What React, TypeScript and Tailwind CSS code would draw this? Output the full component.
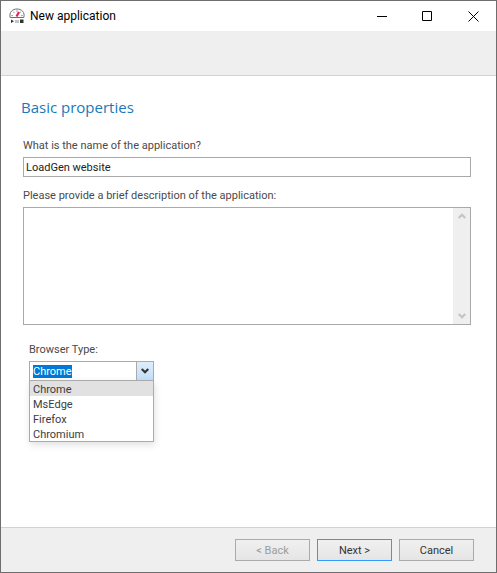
import React, { useEffect, useRef, useState } from 'react';

const BROWSERS = ['Chrome', 'MsEdge', 'Firefox', 'Chromium'];

const AppIcon: React.FC = () => (
  <svg width="16" height="16" viewBox="0 0 16 16" fill="none" aria-hidden="true">
    <path d="M1.200 9.500C-.2 4.300 3.400 1 8 1s8.200 3.300 6.800 8.500z" fill="#fff" stroke="#6a6e73" strokeWidth="1" />
    <path d="M8 2.200v1.600M4.300 3.700l.9 1.200M11.700 3.700l-.9 1.200M2.300 7.600h1.600M12.100 7.600h1.600" stroke="#8b8f94" strokeWidth="1" />
    <path d="M10 4 7.500 8.500" stroke="#e8205a" strokeWidth="2.200" />
    <path d="M2 11.500v3.500l3-1.750z" fill="#333" />
    <path d="M7 12v3M9 12v3" stroke="#85898d" strokeWidth="1" />
    <path d="M11 11.500h3.500v3.500h-3.500z" fill="#333" />
  </svg>
);

interface ChevronProps {
  up?: boolean;
  className?: string;
}

const Chevron: React.FC<ChevronProps> = ({ up, className }) => (
  <svg width="8" height="6" viewBox="0 0 8 6" fill="none" stroke="currentColor" strokeWidth="2.200" className={className} aria-hidden="true">
    <path d={up ? 'M.7 5 4 1.700 7.300 5' : 'M.7 1 4 4.300 7.300 1'} />
  </svg>
);

const TitleBar: React.FC = () => (
  <header className="flex h-[30px] items-center bg-white pl-2">
    <AppIcon />
    <h1 className="ml-[5px] flex-1 text-[12px] leading-4 text-black">New application</h1>
    <button type="button" aria-label="Minimize" className="flex h-full w-[45px] items-center justify-center">
      <svg width="11" height="11" viewBox="0 0 11 11" stroke="#000"><path d="M0 5.500h10" /></svg>
    </button>
    <button type="button" aria-label="Maximize" className="flex h-full w-[45px] items-center justify-center">
      <svg width="11" height="11" viewBox="0 0 11 11" fill="none" stroke="#000"><path d="M.5.5h9v9h-9z" /></svg>
    </button>
    <button type="button" aria-label="Close" className="flex h-full w-[46px] items-center justify-center">
      <svg width="11" height="11" viewBox="0 0 11 11" stroke="#000"><path d="m.5.5 10 10m0-10-10 10" /></svg>
    </button>
  </header>
);

const BrowserSelect: React.FC = () => {
  const [value, setValue] = useState(BROWSERS[0]);
  const [open, setOpen] = useState(true);
  const inputRef = useRef<HTMLInputElement>(null);

  useEffect(() => {
    inputRef.current?.focus();
    inputRef.current?.select();
  }, []);

  return (
    <div className="relative w-[125px]">
      <div className="flex h-5 border border-[#ababab] bg-white">
        <input
          id="browser"
          ref={inputRef}
          value={value}
          onChange={(e) => setValue(e.target.value)}
          className="min-w-0 flex-1 pl-[3px] leading-[13px] text-[#3c3c3c] outline-none selection:bg-[#0078d7] selection:text-white"
        />
        <button
          type="button"
          aria-label="Show browsers"
          onClick={() => setOpen(!open)}
          className="flex w-[17px] items-center justify-center border-l border-[#ababab] bg-linear-to-b from-[#deedfb] to-[#c2dffa] text-[#333]"
        >
          <Chevron />
        </button>
      </div>
      {open && (
        <select
          size={4}
          aria-label="Browsers"
          value={value}
          onChange={(e) => setValue(e.target.value)}
          className="absolute top-[19px] left-0 h-[62px] w-full appearance-none overflow-hidden border border-[#ababab] bg-white shadow-[1px_3px_7px_rgba(0,0,0,0.12)] outline-none"
        >
          {BROWSERS.map((name) => (
            <option
              key={name}
              value={name}
              className="h-[15px] min-h-0 pt-[2px] pr-0 pb-0 pl-[3px] leading-[15px] text-[#3c3c3c] checked:bg-linear-to-b checked:from-[#e1e1e1] checked:to-[#e1e1e1]"
            >
              {name}
            </option>
          ))}
        </select>
      )}
    </div>
  );
};

export default function App() {
  const [name, setName] = useState('LoadGen website');
  const [description, setDescription] = useState('');

  return (
    <div className="flex min-h-screen flex-col border border-[#6e6e6e] bg-white font-['Roboto',sans-serif] text-[11px] leading-[13px] text-[#4a4a4a]">
      <TitleBar />
      <div className="h-[45px] border-b border-[#d2d2d2] bg-[#efefef]" />

      <main className="flex flex-1 flex-col pr-[25px] pl-[22px]">
        <h2 className="-ml-[2px] pt-5 font-['Open_Sans',sans-serif] text-[15px] leading-[22px] text-[#1979ba]">Basic properties</h2>

        <label htmlFor="name" className="mt-[21px] mb-[5px]">What is the name of the application?</label>
        <input
          id="name"
          value={name}
          onChange={(e) => setName(e.target.value)}
          className="h-5 border border-[#a9a9a9] px-[2px] text-[#222] outline-none"
        />

        <label htmlFor="description" className="mt-3 mb-[5px]">Please provide a brief description of the application:</label>
        <div className="flex h-[118px] border border-[#a9a9a9]">
          <textarea
            id="description"
            value={description}
            onChange={(e) => setDescription(e.target.value)}
            className="min-w-0 flex-1 resize-none px-[2px] text-[#222] outline-none"
          />
          <div className="flex w-[17px] flex-col items-center justify-between bg-[#efefef] py-[5px] text-[#c4c4c4]">
            <Chevron up />
            <Chevron />
          </div>
        </div>

        <div className="mt-[18px] ml-[6px] pb-[70px]">
          <label htmlFor="browser" className="mb-[5px] block">Browser Type:</label>
          <BrowserSelect />
        </div>
      </main>

      <footer className="flex h-[45px] items-center justify-end gap-[7px] border-t border-[#d2d2d2] bg-[#efefef] pr-[22px]">
        <button type="button" disabled className="h-[22px] w-[75px] border border-[#ababab] bg-linear-to-b from-[#f0f0f0] to-[#e5e5e5] text-[#9c9c9c]">
          &lt; Back
        </button>
        <button type="button" className="h-[22px] w-[75px] border border-[#3399ff] bg-linear-to-b from-[#f0f0f0] to-[#e5e5e5] text-[#333]">
          Next &gt;
        </button>
        <button type="button" className="h-[22px] w-[75px] border border-[#ababab] bg-linear-to-b from-[#f0f0f0] to-[#e5e5e5] text-[#333]">
          Cancel
        </button>
      </footer>
    </div>
  );
}
